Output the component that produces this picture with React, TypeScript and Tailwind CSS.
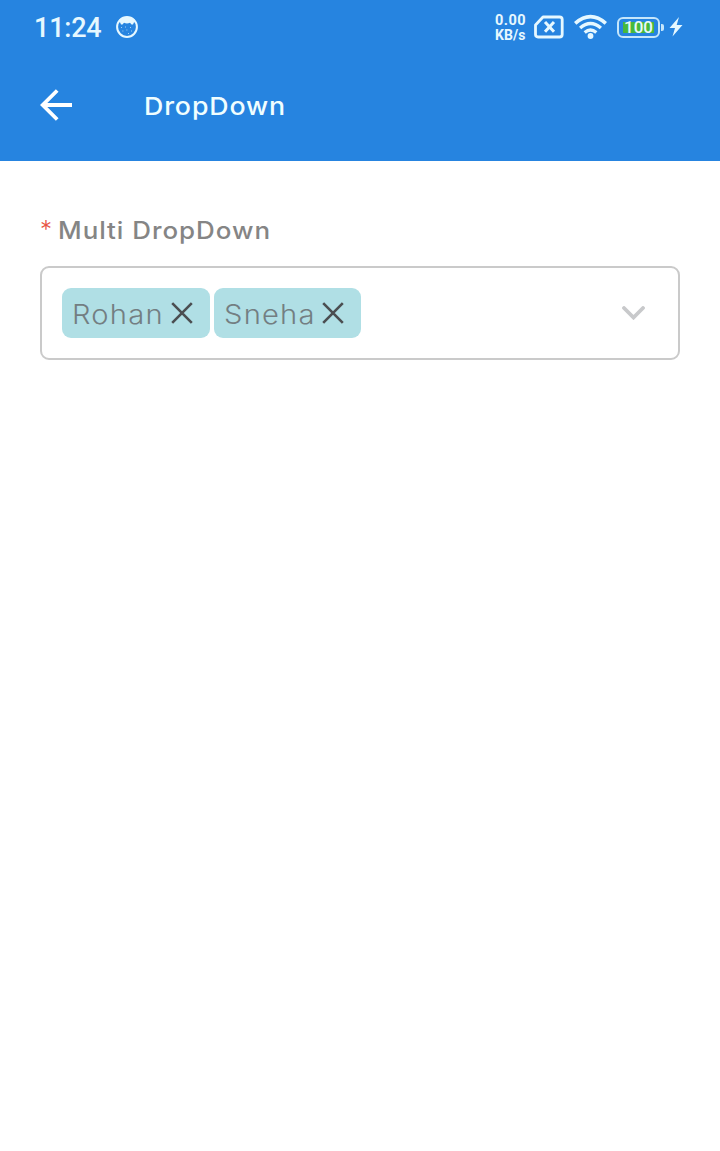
import React from "react";

function StatusBar() {
  return (
    <div className="flex h-[54px] items-center pl-[34px] pr-[37px] font-['Roboto',sans-serif] text-[#e6f8ff]">
      <span className="mt-[2px] w-[68px] whitespace-nowrap text-[27px] font-medium leading-[52px] tracking-[-0.2px]">11:24</span>
      <svg className="ml-[14px] h-[22px] w-[22px]" viewBox="0 0 22 22" fill="none">
        <circle cx="11" cy="11" r="9.9" stroke="currentColor" strokeWidth="2" />
        <path d="M3 4C7 0 15 0 19 4L17 8.5L15.5 8.5L14 6.8Q11 8 8 6.8L6.5 8.5L5 8.5Z" fill="currentColor" />
        <path d="M5 11.5h.8M9 11h.8M14 11.5h.8M6.5 15h.8M10.5 14h.8M15 15h.8M12 17.5h.8" stroke="currentColor" strokeWidth="0.8" />
      </svg>
      <div className="ml-auto mt-[2px] w-[31px] whitespace-nowrap text-[14.5px] font-bold leading-[14px]">
        <div className="tracking-[0.5px]">0.00</div>
        <div className="text-[14px] tracking-[0.1px]">KB/s</div>
      </div>
      <svg className="ml-[8px] h-[24px] w-[30px]" viewBox="0 0 30 24" fill="none" stroke="currentColor">
        <path d="M9 2H25.5Q28.2 2 28.2 4.5V19.5Q28.2 22 25.5 22H4Q1.5 22 1.5 19.5V10Z" strokeWidth="2.8" strokeLinejoin="round" />
        <path d="M11 7L20 16.8M20 7L11 16.8" strokeWidth="3" />
      </svg>
      <svg className="ml-[10px] h-[26px] w-[33px]" viewBox="0 0 34 26" fill="none" stroke="currentColor">
        <path d="M1.2 9.2Q17-4.6 32.8 9.2" strokeWidth="3.8" />
        <path d="M6.3 14.1Q17 4.8 27.7 14.1" strokeWidth="3.5" />
        <path d="M11 18.7Q17 13.5 23 18.7" strokeWidth="3.4" />
        <circle cx="17" cy="22.3" r="3" fill="currentColor" stroke="none" />
      </svg>
      <div className="ml-[10px] flex h-[21px] w-[43px] items-center justify-center rounded-[6px] border-2 border-[#c5e6fb]">
        <span className="flex h-[11px] w-[31px] items-center justify-center bg-[#46b93c] text-[17px] font-medium leading-[11px]">100</span>
      </div>
      <div className="ml-[1px] h-[7px] w-[3px] rounded-r-[2px] bg-[#c5e6fb]" />
      <svg className="ml-[5px] h-[20px] w-[14px]" viewBox="0 0 14 20">
        <path d="M10 0L0.5 11H6L3.5 19.5L13.5 8H7.7Z" fill="currentColor" />
      </svg>
    </div>
  );
}

function Chip({ label, width, textWidth }: { label: string; width: string; textWidth: string }) {
  return (
    <div className={`flex h-[50px] items-center rounded-[9px] bg-[#b0dfe5] pl-[10px] ${width}`}>
      <span className={`mt-[2px] whitespace-nowrap ${textWidth}`}>
        <span className="block w-fit origin-left scale-x-[1.1] text-[26.5px] font-light leading-[48px] tracking-[1.1px] text-[#737e82]">{label}</span>
      </span>
      <button aria-label={`Remove ${label}`} className="-mt-px ml-[7px] text-[#4b4e51]">
        <svg className="block h-[22px] w-[22px]" viewBox="0 0 22 22" fill="none" stroke="currentColor" strokeWidth="2.6">
          <path d="M1.2 1.2L20.8 20.8M20.8 1.2L1.2 20.8" />
        </svg>
      </button>
    </div>
  );
}

export default function App() {
  return (
    <main className="min-h-[1151px] bg-white font-['Inter',sans-serif]">
      <header className="h-[161px] bg-[#2684e0]">
        <StatusBar />
        <div className="flex h-[102px] items-center pl-[40px] text-white">
          <svg className="h-[32px] w-[32px]" viewBox="0 0 32 32" fill="none" stroke="currentColor" strokeWidth="3.8">
            <path d="M32 16H3M17.2 1.5L2.7 16L17.2 30.5" />
          </svg>
          <h1 className="ml-[72px] mt-[2px] origin-left scale-x-[1.1] whitespace-nowrap text-[24.3px] font-[450] leading-[32px] tracking-[0.8px] text-[#f0feff]">DropDown</h1>
        </div>
      </header>
      <section className="px-[40px] pt-[53px]">
        <label className="flex h-[32px] items-center whitespace-nowrap text-[24px] leading-[32px]">
          <span className="w-[18px] font-light text-[#e85444]">*</span>
          <span className="mt-px origin-left scale-x-[1.08] font-[450] tracking-[0.9px] text-[#858585]">Multi DropDown</span>
        </label>
        <div className="mt-[20px] flex h-[94px] items-center gap-[4px] rounded-[9px] border-2 border-[#cacaca] pl-[20px] pr-[33px]">
          <Chip label="Rohan" width="w-[148px]" textWidth="w-[92px]" />
          <Chip label="Sneha" width="w-[147px]" textWidth="w-[91px]" />
          <svg className="ml-auto h-[14px] w-[23px]" viewBox="0 0 23 14" fill="none" stroke="#c8c9cb" strokeWidth="3.8" strokeLinecap="round">
            <path d="M2 2L11.5 11.5L21 2" />
          </svg>
        </div>
      </section>
    </main>
  );
}
